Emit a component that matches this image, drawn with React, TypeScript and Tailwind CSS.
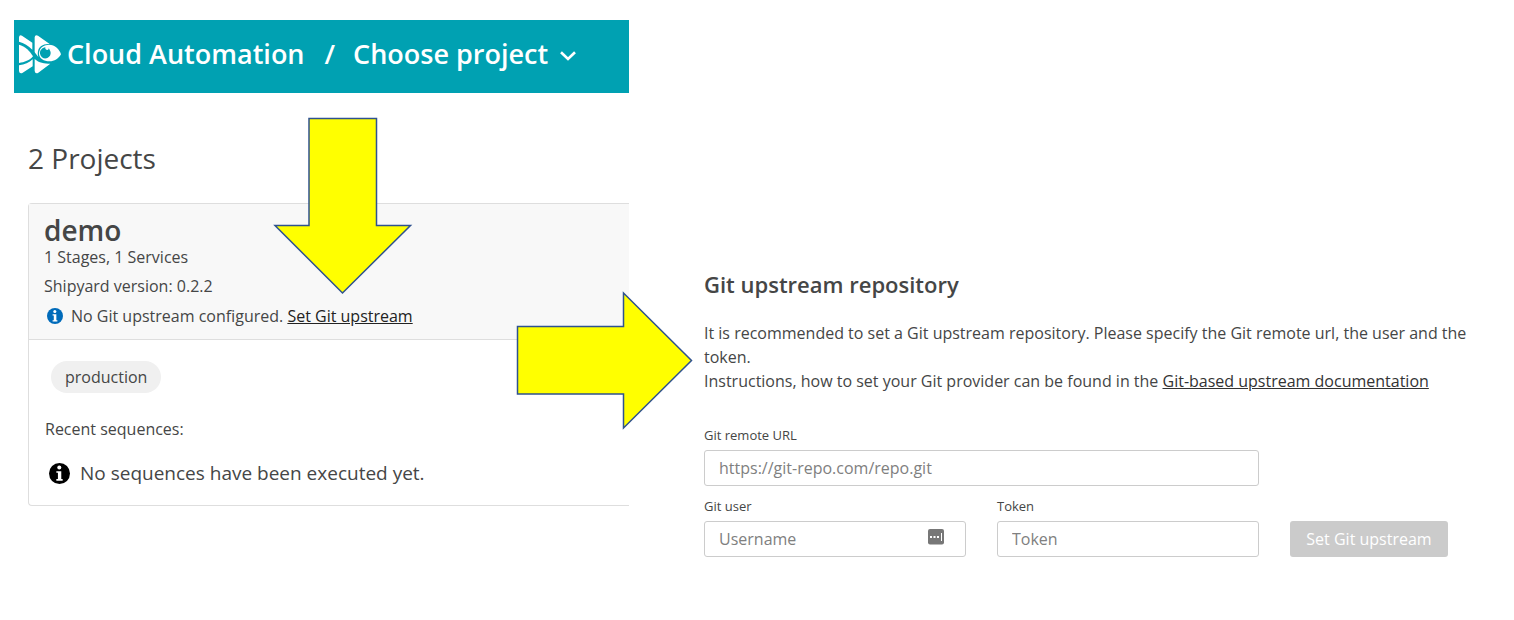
import type { ReactNode } from "react";

function Logo() {
  return (
    <svg viewBox="0 0 126 117" className="h-[39px] w-[42px] shrink-0" fill="#fff" aria-hidden="true">
      <path d="M0 7Q1-2 9 2L40 23V44C28 33 15 23 0 20Z" />
      <path d="M0 29C18 33 34 50 42 64C32 76 16 82 0 84Z" />
      <path d="M0 91C17 89 31 83 41 73V94L10 114Q1 117 0 108Z" />
      <path d="M47 7Q48-2 57 2L92 27C74 25 59 34 57 49C56 56 56 61 58 66C53 60 50 56 47 51Z" />
      <path d="M47 72C60 84 76 86 94 86L57 114Q48 117 47 108Z" />
      <path d="M80 31C102 24 122 42 126 58C118 72 106 79 92 79C74 79 61 70 60 57C60 44 68 34 80 31Z" />
      <path d="M79 37C69 38 62 47 63 56C65 67 74 72 83 70C93 67 97 57 94 49C92 44 91 42 89 40C90 48 77 46 79 37Z" fill="#00a1b2" />
    </svg>
  );
}

function InfoIcon({ className }: { className: string }) {
  return (
    <svg viewBox="0 0 20 20" className={className} aria-hidden="true">
      <circle cx="10" cy="10" r="10" fill="currentColor" />
      <circle cx="9.8" cy="4.3" r="1.9" fill="#fff" />
      <path d="M7 7.8h4.7v7.4H13V16.800H7v-1.600h1.500V9.300H7z" fill="#fff" />
    </svg>
  );
}

function Field({ id, label, placeholder, className, children }: { id: string; label: string; placeholder: string; className: string; children?: ReactNode }) {
  return (
    <div className={className}>
      <label htmlFor={id} className="block text-[13px] leading-5">
        {label}
      </label>
      <div className="relative mt-[5px]">
        <input
          id={id}
          type="text"
          placeholder={placeholder}
          className="block h-9 w-full rounded-[3px] border border-[#ccc] bg-white px-3.5 text-base placeholder:text-[#808080]"
        />
        {children}
      </div>
    </div>
  );
}

function Projects() {
  return (
    <section>
      <header className="flex h-[73px] items-center gap-1.5 bg-[#00a1b2] pb-1 pl-[5px] text-[27px] font-semibold text-white">
        <Logo />
        <h1>Cloud Automation</h1>
        <span className="ml-3.5">/</span>
        <button type="button" className="ml-3 flex items-center gap-3">
          Choose project
          <svg viewBox="0 0 16 10" className="mt-0.5 h-2.5 w-4" fill="none" stroke="currentColor" strokeWidth="2.6" aria-hidden="true">
            <path d="M1 1.200L8 8L15 1.200" />
          </svg>
        </button>
      </header>
      <div className="pl-3.5">
        <h2 className="mt-[45px] text-[28px] leading-10">2 Projects</h2>
        <article className="mt-[25px] rounded-l border border-r-0 border-[#dedede]">
          <div className="border-b border-[#dedede] bg-[#f8f8f8] pb-[9px] pl-[15px]">
            <h3 className="pt-[9px] text-[28px] leading-[35px] font-semibold">demo</h3>
            <p className="text-base leading-[18px]">1 Stages, 1 Services</p>
            <p className="mt-1.5 text-base leading-7">Shipyard version: 0.2.2</p>
            <p className="mt-0.5 flex items-center text-base leading-7">
              <InfoIcon className="mr-2 ml-[3px] size-4 text-[#006bba]" />
              <span>
                No Git upstream configured.{" "}
                <a href="#upstream" className="text-[#222] underline">
                  Set Git upstream
                </a>
              </span>
            </p>
          </div>
          <div className="pb-4 pl-4">
            <span className="mt-[21px] ml-1.5 inline-block rounded-full bg-[#f0f0f0] px-3.5 text-base leading-8">production</span>
            <p className="mt-6 text-base leading-6">Recent sequences:</p>
            <p className="mt-4 flex items-center gap-2.5 text-[19px] leading-8">
              <InfoIcon className="ml-1 size-[21px] text-black" />
              No sequences have been executed yet.
            </p>
          </div>
        </article>
      </div>
    </section>
  );
}

function UpstreamForm() {
  return (
    <section id="upstream" className="pt-[246px]">
      <h2 className="text-[22px] leading-9 font-semibold">Git upstream repository</h2>
      <p className="mt-[19px] -mr-6 text-base leading-6">
        It is recommended to set a Git upstream repository. Please specify the Git remote url, the user and the token.
        <br />
        Instructions, how to set your Git provider can be found in the{" "}
        <a href="#docs" className="text-[#333] underline">
          Git-based upstream documentation
        </a>
      </p>
      <form className="mt-8 grid grid-cols-[262fr_262fr_158fr] items-end gap-x-[31px] gap-y-2.5">
        <Field id="url" label="Git remote URL" placeholder="https://git-repo.com/repo.git" className="col-span-2" />
        <Field id="user" label="Git user" placeholder="Username" className="col-start-1">
          <svg viewBox="0 0 16 16" className="absolute top-2 right-[22px] size-4" aria-hidden="true">
            <rect width="16" height="15.500" rx="2" fill="#777" />
            <path d="M2 7h2v2H2zM5.500 7h2v2h-2zM9 7h2v2H9zM13 4h1v8h-1z" fill="#fff" />
          </svg>
        </Field>
        <Field id="token" label="Token" placeholder="Token" className="" />
        <button type="button" className="h-9 rounded-[3px] bg-[#cbcbcb] text-base whitespace-nowrap text-white">
          Set Git upstream
        </button>
      </form>
    </section>
  );
}

export default function App() {
  return (
    <main className="relative grid min-h-screen grid-cols-[615fr_744fr] gap-[75px] bg-white pt-5 pr-[66px] pl-3.5 font-['Open_Sans','Noto_Sans',sans-serif] text-[#454646]">
      <Projects />
      <UpstreamForm />
      <svg viewBox="0 0 140 178" className="absolute top-[117px] left-[273px] h-[178px] w-[140px]" aria-hidden="true">
        <path d="M36 1.500H103.500V108.500H137.500L69.500 176L2 108.500H36Z" fill="#ff0" stroke="#2f528f" strokeWidth="1.500" />
      </svg>
      <svg viewBox="0 0 178 140" className="absolute top-[291px] left-[516px] h-[140px] w-[178px]" aria-hidden="true">
        <path d="M1.500 35.500H107.500V2L175.500 69.500L107.500 137V103H1.500Z" fill="#ff0" stroke="#2f528f" strokeWidth="1.500" />
      </svg>
    </main>
  );
}
